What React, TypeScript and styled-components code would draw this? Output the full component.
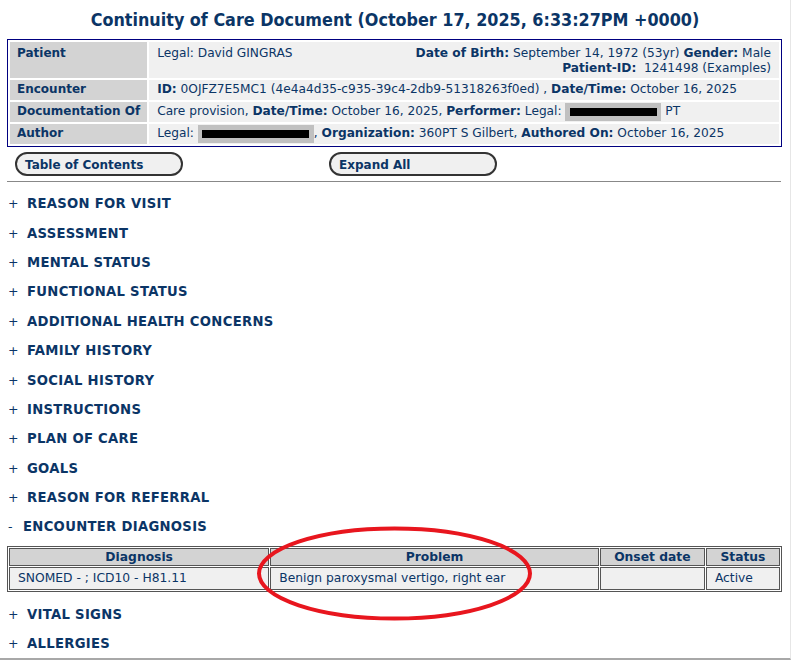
import React from "react";
import styled, { createGlobalStyle } from "styled-components";

const Global = createGlobalStyle`
  html, body { margin: 0; padding: 0; background: #fff; }
  body { font-family: "DejaVu Sans", Verdana, sans-serif; color: #0b3566; }
`;

const Frame = styled.div`
  position: relative;
  width: 790px;
  height: 658px;
  border-right: 1px solid #e6e6e6;
  border-bottom: 2px solid #a8a8a8;
  overflow: hidden;
  box-sizing: content-box;
`;

const Title = styled.h1`
  margin: 0;
  padding-top: 9px;
  height: 30px;
  text-align: center;
  font-family: "DejaVu Sans Condensed", "DejaVu Sans", sans-serif;
  font-stretch: condensed;
  font-size: 17.8px;
  font-weight: bold;
  color: #0b3566;
`;

const HeaderTable = styled.table`
  margin-left: 7px;
  width: 775px;
  border: 1px solid #000080;
  border-spacing: 2px;
  font-size: 12.2px;
`;

const Label = styled.td<{ $tall?: boolean }>`
  background: #d3d3d3;
  font-weight: bold;
  font-size: 12px;
  width: 123px;
  padding: ${(p) => (p.$tall ? "4px" : "2px")} 7px 2px;
  vertical-align: top;
  white-space: nowrap;
  color: #0b3566;
`;

const Value = styled.td<{ $tall?: boolean }>`
  background: #f0f0f0;
  padding: ${(p) => (p.$tall ? "3px" : "2px")} 8px 2px;
  vertical-align: top;
  height: ${(p) => (p.$tall ? "31px" : "16px")};
  color: #0b3566;
  white-space: nowrap;
`;

const PatientLine = styled.div`
  display: flex;
  justify-content: space-between;
  padding-top: 1px;
`;

const RightBlock = styled.div`
  text-align: right;
  line-height: 15px;
`;

const B = styled.b`
  font-weight: bold;
`;

const Redact = styled.span<{ $w: number }>`
  display: inline-flex;
  align-items: center;
  justify-content: center;
  vertical-align: middle;
  width: ${(p) => p.$w}px;
  height: 18px;
  background: #c0c0c0;
  margin: -3px 0;
`;

const BlackBar = styled.span<{ $w: number }>`
  display: block;
  width: ${(p) => p.$w}px;
  height: 8px;
  background: #000;
`;

const ButtonRow = styled.div`
  display: flex;
  gap: 146px;
  padding: 5px 0 0 15px;
  height: 24px;
`;

const Pill = styled.div`
  box-sizing: border-box;
  width: 168px;
  height: 24px;
  border: 2px solid #333;
  border-left-width: 2.5px;
  border-radius: 12px;
  background: #f0f0f0;
  font-size: 12px;
  font-weight: bold;
  padding: 4px 8px 0;
  color: #0b3566;
`;

const Rule = styled.hr`
  margin: 5px 0 0 7px;
  width: 774px;
  border: 0;
  border-top: 1px solid #888;
`;

const Sections = styled.div`
  padding: 7px 0 0 8px;
`;

const SectionHead = styled.div`
  height: 29.4px;
  display: flex;
  align-items: center;
  font-size: 13.2px;
  font-weight: bold;
  letter-spacing: 0.3px;
  color: #0b3566;
`;

const Toggle = styled.span<{ $w: number }>`
  display: inline-block;
  width: ${(p) => p.$w}px;
  font-weight: normal;
  font-size: 12.5px;
`;

const DataTable = styled.table`
  margin: 4px 0 8px -1px;
  width: 775px;
  border: 1px solid #555;
  border-spacing: 1px;
  font-size: 12.3px;
`;

const Th = styled.th<{ $w: number }>`
  width: ${(p) => p.$w}px;
  background: #d3d3d3;
  border: 1px solid #555;
  font-weight: bold;
  padding: 0;
  height: 16px;
  text-align: center;
  color: #0b3566;
`;

const Td = styled.td`
  background: #f0f0f0;
  border: 1px solid #555;
  padding: 2px 8px;
  height: 17px;
  color: #0b3566;
`;

const Ellipse = styled.svg`
  position: absolute;
  left: 250px;
  top: 520px;
  pointer-events: none;
`;

const before = [
  "REASON FOR VISIT",
  "ASSESSMENT",
  "MENTAL STATUS",
  "FUNCTIONAL STATUS",
  "ADDITIONAL HEALTH CONCERNS",
  "FAMILY HISTORY",
  "SOCIAL HISTORY",
  "INSTRUCTIONS",
  "PLAN OF CARE",
  "GOALS",
  "REASON FOR REFERRAL",
];

const after = ["VITAL SIGNS", "ALLERGIES"];

export default function App() {
  return (
    <>
      <Global />
      <Frame>
        <Title>Continuity of Care Document (October 17, 2025, 6:33:27PM +0000)</Title>
        <HeaderTable>
          <tbody>
            <tr>
              <Label $tall>Patient</Label>
              <Value $tall>
                <PatientLine>
                  <span>Legal: David GINGRAS</span>
                  <RightBlock>
                    <B>Date of Birth:</B> September 14, 1972 (53yr) <B>Gender:</B> Male
                    <br />
                    <B>Patient-ID:</B>&nbsp; 1241498 (Examples)
                  </RightBlock>
                </PatientLine>
              </Value>
            </tr>
            <tr>
              <Label>Encounter</Label>
              <Value>
                <B>ID:</B> 0OJFZ7E5MC1 (4e4a4d35-c935-39c4-2db9-51318263f0ed) , <B>Date/Time:</B> October 16, 2025
              </Value>
            </tr>
            <tr>
              <Label>Documentation Of</Label>
              <Value>
                Care provision, <B>Date/Time:</B> October 16, 2025, <B>Performer:</B> Legal:{" "}
                <Redact $w={96}>
                  <BlackBar $w={87} />
                </Redact>{" "}
                PT
              </Value>
            </tr>
            <tr>
              <Label>Author</Label>
              <Value>
                Legal:{" "}
                <Redact $w={116}>
                  <BlackBar $w={107} />
                </Redact>
                , <B>Organization:</B> 360PT S Gilbert, <B>Authored On:</B> October 16, 2025
              </Value>
            </tr>
          </tbody>
        </HeaderTable>
        <ButtonRow>
          <Pill>Table of Contents</Pill>
          <Pill>Expand All</Pill>
        </ButtonRow>
        <Rule />
        <Sections>
          {before.map((s) => (
            <SectionHead key={s}>
              <Toggle $w={19}>+</Toggle>
              {s}
            </SectionHead>
          ))}
          <SectionHead>
            <Toggle $w={15}>-</Toggle>
            ENCOUNTER DIAGNOSIS
          </SectionHead>
          <DataTable>
            <thead>
              <tr>
                <Th $w={258}>Diagnosis</Th>
                <Th $w={326}>Problem</Th>
                <Th $w={103}>Onset date</Th>
                <Th $w={72}>Status</Th>
              </tr>
            </thead>
            <tbody>
              <tr>
                <Td>SNOMED - ; ICD10 - H81.11</Td>
                <Td>Benign paroxysmal vertigo, right ear</Td>
                <Td></Td>
                <Td>Active</Td>
              </tr>
            </tbody>
          </DataTable>
          {after.map((s) => (
            <SectionHead key={s}>
              <Toggle $w={19}>+</Toggle>
              {s}
            </SectionHead>
          ))}
        </Sections>
        <Ellipse width="300" height="110" viewBox="0 0 300 110">
          <ellipse cx="144.5" cy="53.5" rx="135.5" ry="45" fill="none" stroke="#e8161e" strokeWidth="4" />
        </Ellipse>
      </Frame>
    </>
  );
}
